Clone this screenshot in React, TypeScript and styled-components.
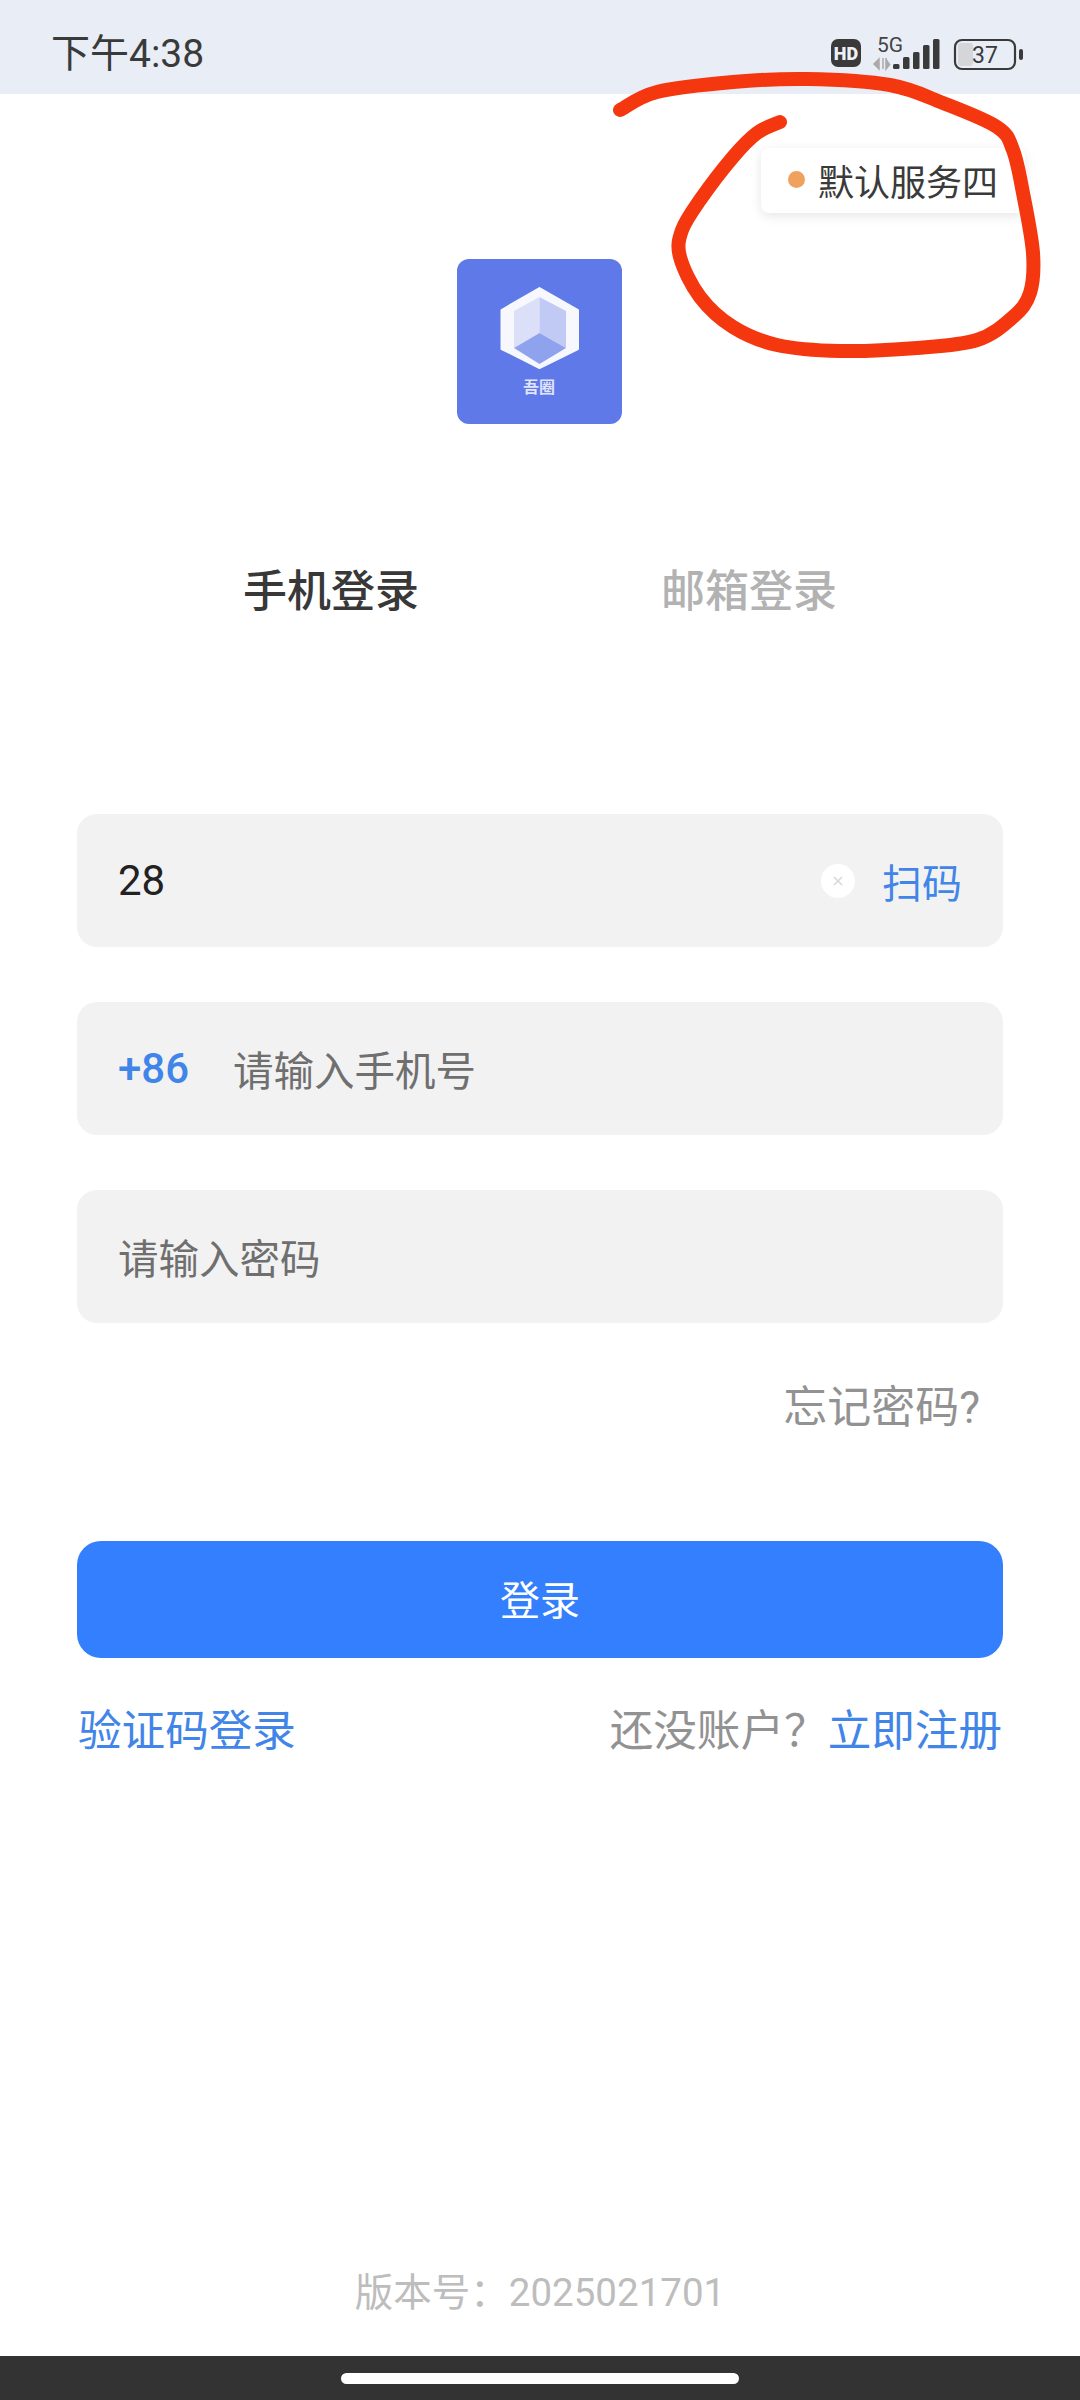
import React from 'react'
import styled, { createGlobalStyle } from 'styled-components'

const GlobalStyle = createGlobalStyle`
    html, body {
        margin: 0;
        padding: 0;
        background: #fff;
    }
    * {
        box-sizing: border-box;
    }
`

const Page = styled.div`
    position: relative;
    width: 1080px;
    height: 2400px;
    overflow: hidden;
    background: #fff;
    display: flex;
    flex-direction: column;
    font-family: Roboto, "Noto Sans CJK SC", sans-serif;
`

const StatusBar = styled.div`
    height: 94px;
    flex-shrink: 0;
    background: #e9eef6;
    padding: 0 0 0 51px;
    display: flex;
    align-items: center;
    justify-content: space-between;
`

const Clock = styled.span`
    font-size: 39px;
    line-height: 50px;
    color: #3a3a3a;
    margin-top: 14px;
`

const StatusIcons = styled.svg`
    width: 210px;
    height: 50px;
    margin-top: 14px;
    margin-right: 47px;
`

const Content = styled.div`
    flex: 1;
    display: flex;
    flex-direction: column;
    padding: 0 77px;
`

const ChipRow = styled.div`
    display: flex;
    justify-content: flex-end;
    margin: 54px -22px 0 0;
`

const ServerChip = styled.div`
    width: 264px;
    height: 65px;
    padding: 0 0 2px 27px;
    border-radius: 8px;
    background: #fff;
    box-shadow: 0 3px 12px rgba(0, 0, 0, 0.1);
    display: flex;
    align-items: center;
    gap: 13px;
    font-size: 36px;
    color: #3a3a3a;
`

const StatusDot = styled.span`
    width: 17px;
    height: 17px;
    border-radius: 50%;
    background: #f0a15e;
`

const Logo = styled.div`
    position: relative;
    align-self: center;
    width: 165px;
    height: 165px;
    margin: 46px 2px 0 0;
    border-radius: 12px;
    background: #5f79e8;
`

const LogoMark = styled.svg`
    display: block;
    width: 165px;
    height: 165px;
`

const LogoLabel = styled.span`
    position: absolute;
    left: 0;
    right: 0;
    top: 120px;
    text-align: center;
    font-size: 16px;
    line-height: 18px;
    font-weight: 700;
    color: #dfe4fa;
`

const Tabs = styled.div`
    display: flex;
    justify-content: center;
    gap: 242px;
    margin-top: 138px;
`

const Tab = styled.span<{ $active?: boolean }>`
    font-size: 44px;
    line-height: 60px;
    font-weight: 500;
    color: ${(p) => (p.$active ? '#383838' : '#b2b2b2')};
`

const Form = styled.div`
    display: flex;
    flex-direction: column;
    gap: 55px;
    margin-top: 192px;
`

const Field = styled.div`
    height: 133px;
    padding: 0 41px 0 41px;
    border-radius: 20px;
    background: #f2f2f2;
    display: flex;
    align-items: center;
    font-size: 40.5px;
`

const FieldValue = styled.span`
    flex: 1;
    font-size: 42px;
    color: #222;
`

const Placeholder = styled.span`
    color: #6f6f6f;
`

const DialCode = styled.span`
    width: 115px;
    font-size: 42px;
    font-weight: 500;
    color: #4285e8;
`

const ClearButton = styled.span`
    width: 34px;
    height: 34px;
    margin-right: 27px;
    border-radius: 50%;
    background: #fff;
    display: flex;
    align-items: center;
    justify-content: center;
`

const ScanLink = styled.span`
    font-size: 40px;
    color: #4285e8;
`

const Forgot = styled.div`
    margin-top: 55px;
    padding-right: 23px;
    text-align: right;
    font-size: 44px;
    line-height: 60px;
    color: #929292;
`

const LoginButton = styled.button`
    display: block;
    width: 100%;
    height: 117px;
    margin-top: 103px;
    padding: 0 0 3px;
    border: none;
    border-radius: 24px;
    background: #337ffd;
    color: #fff;
    font-family: inherit;
    font-size: 40px;
`

const LinkRow = styled.div`
    display: flex;
    justify-content: space-between;
    margin-top: 44px;
    padding: 0 1px;
    font-size: 43.6px;
    line-height: 60px;
`

const BlueText = styled.span`
    color: #4285e8;
`

const GrayText = styled.span`
    color: #929292;
`

const Version = styled.div`
    margin-top: auto;
    margin-bottom: 33px;
    text-align: center;
    font-size: 38.5px;
    line-height: 60px;
    color: #bdbdbd;
`

const NavBar = styled.div`
    height: 44px;
    flex-shrink: 0;
    background: #333;
    padding-top: 17px;
    display: flex;
    justify-content: center;
`

const NavPill = styled.div`
    width: 398px;
    height: 11px;
    border-radius: 6px;
    background: #fff;
`

const Scribble = styled.svg`
    position: absolute;
    left: 0;
    top: 0;
    width: 1080px;
    height: 400px;
    pointer-events: none;
`

// marker ring drawn over the server chip
const ringPoints: [number, number][] = [
    [620, 110], [657, 92], [733, 82], [807, 79], [890, 85], [943, 103], [997, 127],
    [1013, 150], [1023, 193], [1033, 253], [1030, 293], [1013, 317], [977, 340],
    [917, 348], [840, 351], [777, 345], [733, 327], [700, 297], [680, 257], [682, 230],
    [700, 200], [733, 157], [757, 133], [780, 122],
]

// smooth path through the points (catmull-rom to bezier)
function smoothPath(pts: [number, number][]) {
    let d = `M${pts[0][0]} ${pts[0][1]}`
    for (let i = 0; i < pts.length - 1; i++) {
        const p0 = pts[Math.max(i - 1, 0)]
        const p1 = pts[i]
        const p2 = pts[i + 1]
        const p3 = pts[Math.min(i + 2, pts.length - 1)]
        const c1x = p1[0] + (p2[0] - p0[0]) / 6
        const c1y = p1[1] + (p2[1] - p0[1]) / 6
        const c2x = p2[0] - (p3[0] - p1[0]) / 6
        const c2y = p2[1] - (p3[1] - p1[1]) / 6
        d += ` C${c1x} ${c1y} ${c2x} ${c2y} ${p2[0]} ${p2[1]}`
    }
    return d
}

function StatusGlyphs() {
    return (
        <StatusIcons viewBox="0 0 210 50">
            {/* HD badge */}
            <rect x="8" y="10" width="30" height="28" rx="7" fill="#3a3a3a" />
            <text x="23" y="30.5" textAnchor="middle" fontSize="18" fontWeight="900" fontFamily="Roboto" fill="#eef2f8">HD</text>
            {/* 5G and data arrows */}
            <text x="54" y="23" fontSize="21" fontFamily="Roboto" fill="#444">5G</text>
            <path d="M56 30 L51 35 L56 40 Z M60 29 L60 40 M63 29 L63 40 L67 35" fill="#aaa" stroke="#aaa" strokeWidth="1.5" />
            {/* signal bars */}
            <rect x="70" y="35" width="6.5" height="5" rx="1.5" fill="#3a3a3a" />
            <rect x="80" y="28" width="6.5" height="12" rx="1.5" fill="#3a3a3a" />
            <rect x="90" y="23" width="6.5" height="17" rx="1.5" fill="#3a3a3a" />
            <rect x="100" y="16" width="6.5" height="24" rx="1.5" fill="#3a3a3a" />
            <rect x="110" y="10" width="6.5" height="30" rx="1.5" fill="#3a3a3a" />
            {/* battery */}
            <rect x="132" y="11" width="60" height="29" rx="7" fill="none" stroke="#3a3a3a" strokeWidth="2.2" />
            <rect x="135" y="14" width="15" height="23" rx="3" fill="#d4d6da" />
            <rect x="196" y="20" width="4" height="11" rx="2" fill="#3a3a3a" />
            <text x="162" y="33.5" textAnchor="middle" fontSize="23" fontFamily="Roboto" fill="#3a3a3a">37</text>
        </StatusIcons>
    )
}

function App() {
    return (
        <Page>
            <GlobalStyle />
            <StatusBar>
                <Clock>下午4:38</Clock>
                <StatusGlyphs />
            </StatusBar>
            <Content>
                <ChipRow>
                    <ServerChip>
                        <StatusDot />
                        默认服务四
                    </ServerChip>
                </ChipRow>
                <Logo>
                    <LogoMark viewBox="0 0 165 165">
                        <path d="M82.5 29 L121 51 L121 90 L82.5 109 L44.5 90 L44.5 51 Z" fill="#f7f8fe" stroke="#f7f8fe" strokeWidth="2" strokeLinejoin="round" />
                        <path d="M82.5 38 L57 52 L57 89 L82.5 74 Z" fill="#dbe0f8" />
                        <path d="M82.5 38 L109 52 L109 89 L82.5 74 Z" fill="#c1caf4" />
                        <path d="M82.5 74 L109 89 L82.5 105 L57 89 Z" fill="#8fa2ee" />
                    </LogoMark>
                    <LogoLabel>吾圈</LogoLabel>
                </Logo>
                <Tabs>
                    <Tab $active>手机登录</Tab>
                    <Tab>邮箱登录</Tab>
                </Tabs>
                <Form>
                    <Field>
                        <FieldValue>28</FieldValue>
                        <ClearButton>
                            <svg width="14" height="14" viewBox="0 0 14 14">
                                <path d="M3 3 L11 11 M11 3 L3 11" stroke="#d8d8d8" strokeWidth="1.6" />
                            </svg>
                        </ClearButton>
                        <ScanLink>扫码</ScanLink>
                    </Field>
                    <Field>
                        <DialCode>+86</DialCode>
                        <Placeholder>请输入手机号</Placeholder>
                    </Field>
                    <Field>
                        <Placeholder>请输入密码</Placeholder>
                    </Field>
                </Form>
                <Forgot>忘记密码?</Forgot>
                <LoginButton>登录</LoginButton>
                <LinkRow>
                    <BlueText>验证码登录</BlueText>
                    <span>
                        <GrayText>还没账户？</GrayText>
                        <BlueText>立即注册</BlueText>
                    </span>
                </LinkRow>
                <Version>版本号：2025021701</Version>
            </Content>
            <NavBar>
                <NavPill />
            </NavBar>
            <Scribble viewBox="0 0 1080 400">
                <path d={smoothPath(ringPoints)} fill="none" stroke="#f5370f" strokeWidth="14" strokeLinecap="round" strokeLinejoin="round" />
            </Scribble>
        </Page>
    )
}

export default App
